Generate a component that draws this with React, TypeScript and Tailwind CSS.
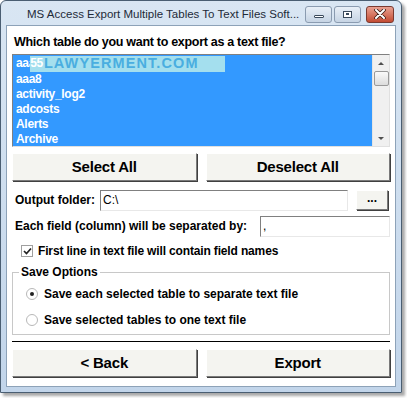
import React from 'react';

const TABLES = ['aaa55', 'aaa8', 'activity_log2', 'adcosts', 'Alerts', 'Archive'];

const btn =
  'flex items-center justify-center bg-[#f4f4f0] border border-t-[#ffffff] border-l-[#ffffff] border-r-[#7a7a7a] border-b-[#7a7a7a] shadow-[1px_1px_0_#404040] font-bold text-black';

function Radio({ checked }: { checked?: boolean }) {
  return (
    <span className="w-[12px] h-[12px] rounded-full border border-[#b8b8b8] bg-white flex items-center justify-center shrink-0">
      {checked && <span className="w-[4px] h-[4px] rounded-full bg-[#222]" />}
    </span>
  );
}

export default function App() {
  return (
    <div className="w-[407px] h-[398px] bg-white" style={{ fontFamily: '"Liberation Sans", Arial, sans-serif' }}>
      <div className="w-[402px] h-[393px] flex flex-col border border-[#4a5e72] rounded-t-[6px] bg-gradient-to-b from-[#d9e6f3] to-[#c2d5ea] shadow-[3px_3px_3px_rgba(0,0,0,0.35)]">
        {/* Title bar */}
        <div className="h-[24px] flex items-center shrink-0 pl-[26px] pr-[7px]">
          <span className="text-[11.5px] text-[#1e2a38] flex-1 pt-[3px] whitespace-nowrap overflow-hidden">
            MS Access Export Multiple Tables To Text Files Soft...
          </span>
          <div className="flex items-center gap-[2px] pt-[2px]">
            <div className="w-[27px] h-[17px] rounded-[3px] border border-[#8a9bb0] bg-gradient-to-b from-[#e8eff7] to-[#c6d4e4] flex items-end justify-center pb-[4px]">
              <span className="w-[10px] h-[3px] border border-[#3a4a5c] bg-white rounded-[1px]" />
            </div>
            <div className="w-[27px] h-[17px] rounded-[3px] border border-[#8a9bb0] bg-gradient-to-b from-[#e8eff7] to-[#c6d4e4] flex items-center justify-center">
              <span className="w-[9px] h-[7px] border border-[#3a4a5c] bg-white flex items-center justify-center">
                <span className="w-[3px] h-[2px] border border-[#3a4a5c]" />
              </span>
            </div>
            <div className="ml-[3px] w-[28px] h-[17px] rounded-[3px] border border-[#7a3a30] bg-gradient-to-b from-[#e8a090] to-[#c24a32] flex items-center justify-center">
              <svg width="12" height="10" viewBox="0 0 12 10">
                <path d="M2 1 L10 9 M10 1 L2 9" stroke="#3a1a14" strokeWidth="3.6" strokeLinecap="round" />
                <path d="M2 1 L10 9 M10 1 L2 9" stroke="#ffffff" strokeWidth="2" strokeLinecap="round" />
              </svg>
            </div>
          </div>
        </div>

        {/* Client area */}
        <div className="flex-1 mx-[5px] mb-[5px] border border-[#8da2b8] bg-white flex flex-col px-[5px] text-[12px] text-black whitespace-nowrap">
          <div className="font-bold text-[12.5px] tracking-[-0.3px] pt-[7px] pl-[2px] h-[28px]">Which table do you want to export as a text file?</div>

          {/* List box */}
          <div className="h-[93px] border border-t-[#808080] border-l-[#808080] border-r-[#e0e0e0] border-b-[#e0e0e0] flex">
            <div className="flex-1 bg-[#3399ff] flex flex-col pl-[3px] pt-[1px]">
              {TABLES.map((t, i) => (
                <div key={t} className="h-[15.6px] leading-[15px] font-bold text-white flex items-center text-[12px] tracking-[-0.3px]">
                  {i === 0 ? (
                    <>
                      <span>aaa</span>
                      <span className="bg-[#a4dfee] text-[#4aaee0] -ml-[5px] pl-[5px] pr-[26px] h-[16px] flex items-center tracking-[1.1px] text-[14.5px]">
                        <span className="text-white -ml-[5px] mr-[1px] text-[12px] tracking-[-0.3px]">55</span>LAWYERMENT.COM
                      </span>
                    </>
                  ) : (
                    t
                  )}
                </div>
              ))}
            </div>
            <div className="w-[17px] bg-[#f0f0f0] flex flex-col items-center border-l border-[#e4e4e4]">
              <div className="h-[16px] flex items-center justify-center">
                <span className="w-0 h-0 border-l-[3px] border-r-[3px] border-b-[3px] border-l-transparent border-r-transparent border-b-[#505050]" />
              </div>
              <div className="w-[15px] h-[15px] border border-[#999] rounded-[2px] bg-gradient-to-b from-[#fafafa] to-[#dcdcdc]" />
              <div className="flex-1" />
              <div className="h-[16px] flex items-center justify-center">
                <span className="w-0 h-0 border-l-[3px] border-r-[3px] border-t-[3px] border-l-transparent border-r-transparent border-t-[#505050]" />
              </div>
            </div>
          </div>

          {/* Select buttons */}
          <div className="flex gap-[9px] mt-[6px] h-[28px] text-[15px] tracking-[-0.2px]">
            <div className={`${btn} flex-1`}>Select All</div>
            <div className={`${btn} flex-1`}>Deselect All</div>
          </div>

          {/* Output folder */}
          <div className="flex items-center mt-[8px] h-[22px]">
            <span className="font-bold w-[88px] pl-[3px]">Output folder:</span>
            <div className="w-[248px] h-[21px] border border-t-[#808080] border-l-[#808080] border-r-[#e8e8e8] border-b-[#e8e8e8] flex items-center pl-[2px]">
              C:\
            </div>
            <div className={`${btn} ml-[8px] w-[32px] h-[20px] text-[12px] pb-[4px]`}>...</div>
          </div>

          {/* Separator field */}
          <div className="flex items-center mt-[4px] h-[22px]">
            <span className="font-bold w-[248px] pl-[3px]">Each field (column) will be separated by:</span>
            <div className="flex-1 h-[21px] border border-t-[#808080] border-l-[#808080] border-r-[#e8e8e8] border-b-[#e8e8e8] flex items-center pl-[2px] text-black">
              ,
            </div>
          </div>

          {/* Checkbox */}
          <div className="flex items-center mt-[4px] h-[20px] pl-[9px] gap-[5px]">
            <span className="w-[12px] h-[12px] border border-[#a0a0a0] bg-white flex items-center justify-center">
              <svg width="9" height="9" viewBox="0 0 9 9">
                <path d="M1 4 L3.5 6.5 L8 1.5" stroke="#222" strokeWidth="1.7" fill="none" />
              </svg>
            </span>
            <span className="font-bold tracking-[-0.15px]">First line in text file will contain field names</span>
          </div>

          {/* Save Options group */}
          <div className="mt-[11px] h-[63px] border border-[#c8c8c8] relative flex flex-col pl-[13px] pt-[13px] gap-[11px]">
            <span className="absolute -top-[8px] left-[6px] bg-white px-[2px] font-bold leading-[15px]">Save Options</span>
            <div className="flex items-center gap-[6px] h-[15px]">
              <Radio checked />
              <span className="font-bold">Save each selected table to separate text file</span>
            </div>
            <div className="flex items-center gap-[6px] h-[15px]">
              <Radio />
              <span className="font-bold">Save selected tables to one text file</span>
            </div>
          </div>

          {/* Divider */}
          <div className="mt-[6px] border-t border-black border-b border-b-white" />

          {/* Nav buttons */}
          <div className="flex gap-[9px] mt-[6px] h-[28px] text-[15px] tracking-[-0.2px]">
            <div className={`${btn} flex-1`}>&lt; Back</div>
            <div className={`${btn} flex-1`}>Export</div>
          </div>
        </div>
      </div>
    </div>
  );
}
